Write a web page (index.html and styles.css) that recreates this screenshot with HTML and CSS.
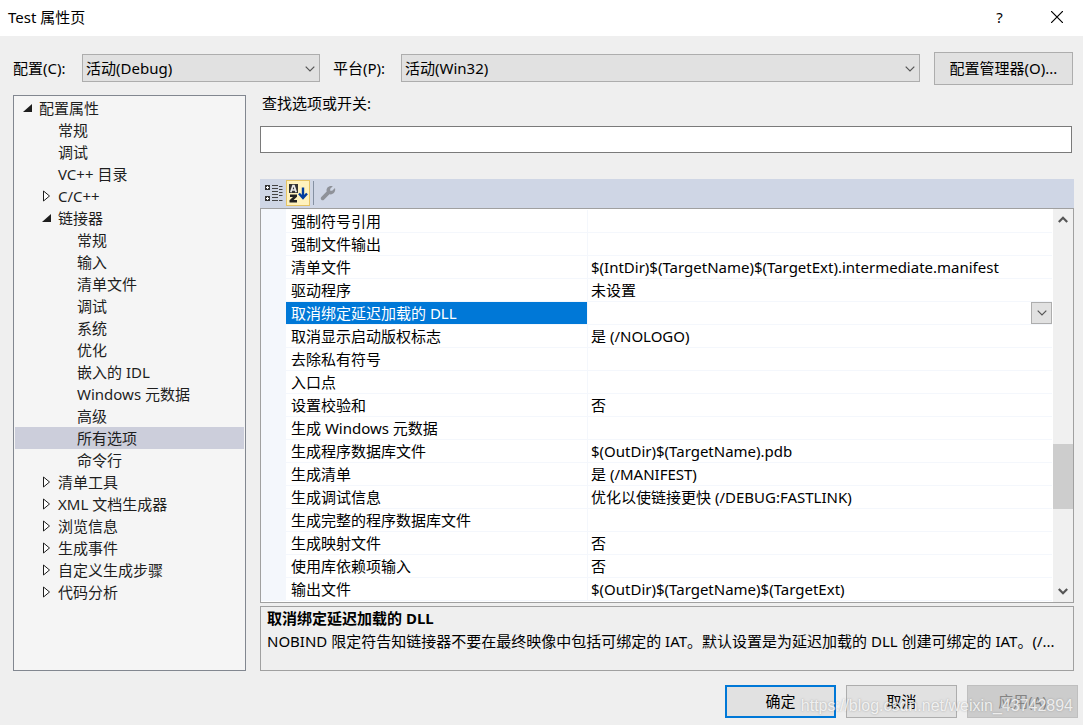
FILE: index.html
```
<!DOCTYPE html>
<html lang="zh-CN">
<head>
<meta charset="utf-8">
<title>Test 属性页</title>
<link rel="stylesheet" href="styles.css">
</head>
<body>
<svg class="defs" width="0" height="0" aria-hidden="true">
  <symbol id="open" viewBox="0 0 10 12"><path d="M9 2v8H0z" fill="#1e1e1e"/></symbol>
  <symbol id="shut" viewBox="0 0 10 12"><path d="M1.500 1v10L7.500 6z" fill="#fff" stroke="#1e1e1e"/></symbol>
  <symbol id="chevron" viewBox="0 0 10 6"><path d="M.7.7 5 5 9.300.7" fill="none" stroke="#555" stroke-width="1.200"/></symbol>
  <symbol id="scroll" viewBox="0 0 10 7"><path d="M.8 1 5 5.200 9.200 1" fill="none" stroke="#555" stroke-width="2.200"/></symbol>
</svg>
<header class="titlebar">
  <h1 class="title">Test 属性页</h1>
  <button class="caption-btn help" aria-label="帮助">?</button>
  <button class="caption-btn" aria-label="关闭"><svg width="12" height="12" viewBox="0 0 12 12"><path d="M0 0 12 12M12 0 0 12" stroke="#000" stroke-width="1.200"/></svg></button>
</header>

<div class="config">
  <label class="config-label" for="cfg">配置(C):</label>
  <span class="select cfg"><select id="cfg"><option>活动(Debug)</option></select><svg class="arrow" width="10" height="6"><use href="#chevron"/></svg></span>
  <label class="config-label platform" for="plat">平台(P):</label>
  <span class="select plat"><select id="plat"><option>活动(Win32)</option></select><svg class="arrow" width="10" height="6"><use href="#chevron"/></svg></span>
  <button class="btn manager">配置管理器(O)...</button>
</div>

<main class="content">
  <ul class="tree" role="tree">
    <li class="node l1" role="treeitem"><svg class="twist"><use href="#open"/></svg>配置属性</li>
    <li class="node l2" role="treeitem">常规</li>
    <li class="node l2" role="treeitem">调试</li>
    <li class="node l2" role="treeitem">VC++ 目录</li>
    <li class="node l2" role="treeitem"><svg class="twist"><use href="#shut"/></svg>C/C++</li>
    <li class="node l2" role="treeitem"><svg class="twist"><use href="#open"/></svg>链接器</li>
    <li class="node l3" role="treeitem">常规</li>
    <li class="node l3" role="treeitem">输入</li>
    <li class="node l3" role="treeitem">清单文件</li>
    <li class="node l3" role="treeitem">调试</li>
    <li class="node l3" role="treeitem">系统</li>
    <li class="node l3" role="treeitem">优化</li>
    <li class="node l3" role="treeitem">嵌入的 IDL</li>
    <li class="node l3" role="treeitem">Windows 元数据</li>
    <li class="node l3" role="treeitem">高级</li>
    <li class="node l3 current" role="treeitem" aria-selected="true">所有选项</li>
    <li class="node l3" role="treeitem">命令行</li>
    <li class="node l2" role="treeitem"><svg class="twist"><use href="#shut"/></svg>清单工具</li>
    <li class="node l2" role="treeitem"><svg class="twist"><use href="#shut"/></svg>XML 文档生成器</li>
    <li class="node l2" role="treeitem"><svg class="twist"><use href="#shut"/></svg>浏览信息</li>
    <li class="node l2" role="treeitem"><svg class="twist"><use href="#shut"/></svg>生成事件</li>
    <li class="node l2" role="treeitem"><svg class="twist"><use href="#shut"/></svg>自定义生成步骤</li>
    <li class="node l2" role="treeitem"><svg class="twist"><use href="#shut"/></svg>代码分析</li>
  </ul>

  <section class="panel">
    <label class="search-label" for="search">查找选项或开关:</label>
    <input class="search" id="search" type="text">
    <div class="toolbar">
      <button class="tool" aria-label="按类别">
        <svg width="18" height="18" viewBox="0 0 18 18"><path d="M0 1h5v5H0zM0 12h5v5H0z" fill="#333"/><path d="M1 3.500h3M2.500 2v3M1 14.500h3M2.500 13v3" stroke="#fff"/><path d="M7 1.500h6M7 4.500h6M7 7.500h6M7 10.500h6M7 13.500h6M7 16.500h6M14 2.500h3.500M14 5.500h3.500M14 8.500h3.500M14 11.500h3.500M14 16.500h3.500" stroke="#444"/></svg>
      </button>
      <button class="tool active" aria-label="按字母顺序">
        <svg width="20" height="20" viewBox="0 0 20 20"><path d="M1 1h9v9H1z" fill="#333"/><path d="M2.800 9.300 5 2.500h1L8.200 9.300M4 7h3" fill="none" stroke="#e8e8e8" stroke-width="1.700"/><path d="M2 11.500h7v2.300L5.600 17H9v2.500H1.500v-2.300L5 14H2z" fill="#222"/><path d="M15 4.500V15M11 10.500l4 4.500 4-4.500" fill="none" stroke="#003c9e" stroke-width="2.400"/></svg>
      </button>
      <span class="divider"></span>
      <button class="tool" aria-label="属性页">
        <svg width="16" height="16" viewBox="0 0 16 16"><path d="M12.800 1.200 10.200 3.800v2h2l2.800-2.700c1 4-2 7-5.600 6.200L4 14.800c-.9.800-2 .6-2.700-.1-.7-.8-.8-1.900 0-2.700L6.700 6.600C5.800 2.800 9 .2 12.800 1.200z" fill="#8f9299"/></svg>
      </button>
    </div>
    <div class="grid">
      <table class="props">
        <tbody>
          <tr><th>强制符号引用</th><td></td></tr>
          <tr><th>强制文件输出</th><td></td></tr>
          <tr><th>清单文件</th><td>$(IntDir)$(TargetName)$(TargetExt).intermediate.manifest</td></tr>
          <tr><th>驱动程序</th><td>未设置</td></tr>
          <tr class="selected"><th>取消绑定延迟加载的 DLL</th><td><button class="drop" aria-label="展开"><svg width="10" height="6"><use href="#chevron"/></svg></button></td></tr>
          <tr><th>取消显示启动版权标志</th><td>是 (/NOLOGO)</td></tr>
          <tr><th>去除私有符号</th><td></td></tr>
          <tr><th>入口点</th><td></td></tr>
          <tr><th>设置校验和</th><td>否</td></tr>
          <tr><th>生成 Windows 元数据</th><td></td></tr>
          <tr><th>生成程序数据库文件</th><td>$(OutDir)$(TargetName).pdb</td></tr>
          <tr><th>生成清单</th><td>是 (/MANIFEST)</td></tr>
          <tr><th>生成调试信息</th><td>优化以使链接更快 (/DEBUG:FASTLINK)</td></tr>
          <tr><th>生成完整的程序数据库文件</th><td></td></tr>
          <tr><th>生成映射文件</th><td>否</td></tr>
          <tr><th>使用库依赖项输入</th><td>否</td></tr>
          <tr><th>输出文件</th><td>$(OutDir)$(TargetName)$(TargetExt)</td></tr>
        </tbody>
      </table>
      <div class="scrollbar">
        <svg class="scroll-up" width="10" height="7"><use href="#scroll"/></svg>
        <span class="track-above"></span>
        <span class="thumb"></span>
        <span class="track-below"></span>
        <svg width="10" height="7"><use href="#scroll"/></svg>
      </div>
    </div>
    <div class="description">
      <h2 class="desc-title">取消绑定延迟加载的 DLL</h2>
      <p class="desc-text">NOBIND 限定符告知链接器不要在最终映像中包括可绑定的 IAT。默认设置是为延迟加载的 DLL 创建可绑定的 IAT。(/...</p>
    </div>
  </section>
</main>

<footer class="footer">
  <button class="btn action default">确定</button>
  <button class="btn action">取消</button>
  <button class="btn action" disabled>应用(A)</button>
  <span class="watermark">https://blog.csdn.net/weixin_43742894</span>
</footer>
</body>
</html>
```
FILE: styles.css
```
* { box-sizing: border-box; }

body {
  margin: 0;
  min-height: 100vh;
  display: flex;
  flex-direction: column;
  background: #efefef;
  color: #000;
  font: 15px/22px "Noto Sans", "Noto Sans CJK SC", sans-serif;
}

button, input, select { font: inherit; color: inherit; border-radius: 0; }
button { padding: 0; }
svg { display: block; }
.defs { position: absolute; }

.titlebar {
  display: flex;
  align-items: center;
  height: 36px;
  padding-left: 8px;
  background: #fff;
}
.title { flex: 1; margin: 0; padding-bottom: 2px; font-size: 15px; font-weight: 400; }
.caption-btn {
  display: flex;
  align-items: center;
  justify-content: center;
  width: 53px;
  height: 36px;
  border: 0;
  padding-bottom: 2px;
  background: none;
}
.help { width: 61px; }

.config {
  display: flex;
  align-items: center;
  padding: 16px 10px 10px 13px;
}
.config-label { width: 69px; padding-bottom: 2px; }
.platform { width: 68px; }
.select { position: relative; padding-bottom: 1px; }
.select select {
  display: block;
  width: 100%;
  height: 28px;
  padding: 0 24px 0 3px;
  appearance: none;
  background: #e1e1e1;
  border: 1px solid #adadad;
}
.cfg { flex: 238 1 0; margin-right: 13px; }
.plat { flex: 519 1 0; margin-right: 14px; }
.arrow { position: absolute; right: 5px; top: 12px; pointer-events: none; }

.btn {
  height: 33px;
  padding-bottom: 2px;
  background: #e1e1e1;
  border: 1px solid #adadad;
}
.manager { width: 139px; }

.content {
  flex: 1;
  display: grid;
  grid-template-columns: 233px minmax(0, 1fr);
  gap: 14px;
  padding: 0 9px 0 13px;
}

.tree {
  margin: 0;
  padding: 1px;
  list-style: none;
  background: #f5f5f5;
  border: 1px solid #828790;
  color: #1e1e1e;
}
.node { height: 22px; white-space: nowrap; }
.l1 { padding-left: 24px; }
.l2 { padding-left: 43px; }
.l3 { padding-left: 62px; }
.current { background: #cccedb; }
.twist {
  float: left;
  width: 10px;
  height: 12px;
  margin: 5px 6px 0 -16px;
}

.panel { display: flex; flex-direction: column; min-width: 0; }
.search-label { padding: 0 2px; margin-bottom: 15px; line-height: 16px; }
.search {
  height: 27px;
  margin: 0 2px 26px 0;
  padding: 0 4px;
  background: #fff;
  border: 1px solid #7a7a7a;
}
.toolbar {
  display: flex;
  align-items: center;
  height: 29px;
  padding: 0 0 2px 2px;
  background: #cfd6e5;
}
.tool {
  display: flex;
  align-items: center;
  justify-content: center;
  width: 24px;
  height: 26px;
  border: 0;
  background: none;
}
.active { background: #fff2bd; border: 1px solid #e5c365; }
.divider { width: 1px; height: 24px; margin: 0 2px 0 3px; background: #8591a2; }

.grid {
  flex: 1;
  display: flex;
  background: #fff;
  border: 1px solid #a0a0a0;
}
.props {
  flex: 1;
  align-self: flex-start;
  border-collapse: separate;
  border-spacing: 0;
  table-layout: fixed;
  border-left: 25px solid #f4f7fc;
  padding: 1px 1px 0 0;
}
.props th, .props td {
  height: 23px;
  padding: 0 0 0 5px;
  border-bottom: 1px solid #f4f7fc;
  font-weight: 400;
  text-align: left;
  white-space: nowrap;
  line-height: 22px;
}
.props th { width: 302px; border-right: 1px solid #f4f7fc; }
.props td { padding-left: 3px; }
.selected th { background: #0078d7; color: #fff; }
.drop {
  display: flex;
  align-items: center;
  justify-content: center;
  width: 21px;
  height: 22px;
  margin-left: auto;
  background: #e1e1e1;
  border: 1px solid #adadad;
}
.scrollbar {
  display: flex;
  flex-direction: column;
  align-items: center;
  width: 20px;
  padding: 7px 0;
  background: #f0f0f0;
}
.scroll-up { transform: rotate(180deg); }
.track-above { flex: 221 1 0; }
.thumb { flex: 65 1 0; width: 100%; background: #cdcdcd; }
.track-below { flex: 79 1 0; }

.description {
  height: 65px;
  margin-top: 3px;
  padding: 0 6px;
  border: 1px solid #a0a0a0;
}
.desc-title { margin: 0 0 1px; font-size: 15px; line-height: 22px; font-weight: 700; }
.desc-text { margin: 0; overflow: hidden; white-space: nowrap; }

.footer {
  position: relative;
  display: flex;
  justify-content: flex-end;
  gap: 10px;
  padding: 14px 5px 7px;
}
.action { width: 111px; }
.default { border: 2px solid #0078d7; }
.action:disabled { background: #ccc; border-color: #bfbfbf; color: #838383; }
.watermark {
  position: absolute;
  right: 10px;
  bottom: 8px;
  color: rgba(255, 255, 255, 0.8);
  font: 16px/22px "Liberation Sans", sans-serif;
  text-shadow: 0 0 2px rgba(120, 120, 120, 0.6);
  pointer-events: none;
}
```
